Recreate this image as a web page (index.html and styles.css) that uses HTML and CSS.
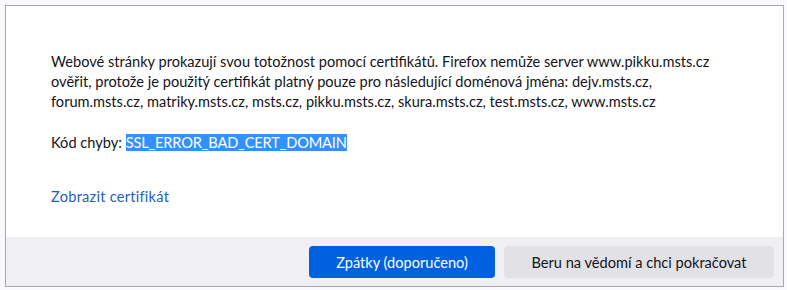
FILE: index.html
```html
<!DOCTYPE html>
<html lang="cs">
  <head>
    <meta charset="UTF-8" />
    <meta name="viewport" content="width=device-width, initial-scale=1.0" />
    <title>Varování: potenciální bezpečnostní riziko</title>
    <link rel="stylesheet" href="styles.css">
  </head>
  <body>
    <section class="dialog">
      <div class="obsah">
        <p class="popis">Webové stránky prokazují svou totožnost pomocí certifikátů. Firefox nemůže server www.pikku.msts.cz ověřit, protože je použitý certifikát platný pouze pro následující doménová jména: dejv.msts.cz, forum.msts.cz, matriky.msts.cz, msts.cz, pikku.msts.cz, skura.msts.cz, test.msts.cz, www.msts.cz</p>
        <p class="kod">Kód chyby: <span class="oznaceno">SSL_ERROR_BAD_CERT_DOMAIN</span></p>
        <a class="odkaz" href="#">Zobrazit certifikát</a>
      </div>
      <div class="tlacitka">
        <button class="primarni">Zpátky (doporučeno)</button>
        <button class="sekundarni">Beru na vědomí a chci pokračovat</button>
      </div>
    </section>
  </body>
</html>
```

FILE: styles.css
```css
* {
  box-sizing: border-box;
  margin: 0;
}

body {
  background-color: #f9f9fb;
  font-family: Lato, "Open Sans", sans-serif;
  color: #15141a;
}

/*---dialog boks---*/
.dialog {
  display: flex;
  flex-direction: column;
  width: 779px;
  height: 282px;
  margin: 5px 0 0 5px;
  background-color: white;
  border: 1px solid #a9a9ad;
}

.obsah {
  flex: 1;
  padding: 46px 45px 0 45px;
  font-size: 14.6px;
  line-height: 20px;
}

.popis {
  margin-bottom: 21px;
}

.oznaceno {
  background-color: #3390ff;
  color: white;
  letter-spacing: -0.15px;
}

.odkaz {
  display: inline-block;
  margin-top: 34px;
  color: #2561b6;
  text-decoration: none;
  letter-spacing: 0.25px;
}

/*---knapper---*/
.tlacitka {
  display: flex;
  justify-content: flex-end;
  gap: 9px;
  height: 49px;
  padding: 9px 9px 8px 9px;
  background-color: #f0f0f4;
}

button {
  height: 32px;
  padding: 0 22px;
  border: none;
  border-radius: 4px;
  font-family: Lato, "Open Sans", sans-serif;
  font-size: 14.6px;
}

.primarni {
  width: 186px;
  background-color: #0061e0;
  color: white;
}

.sekundarni {
  width: 270px;
  background-color: #e1e1e6;
  color: #15141a;
}
```
